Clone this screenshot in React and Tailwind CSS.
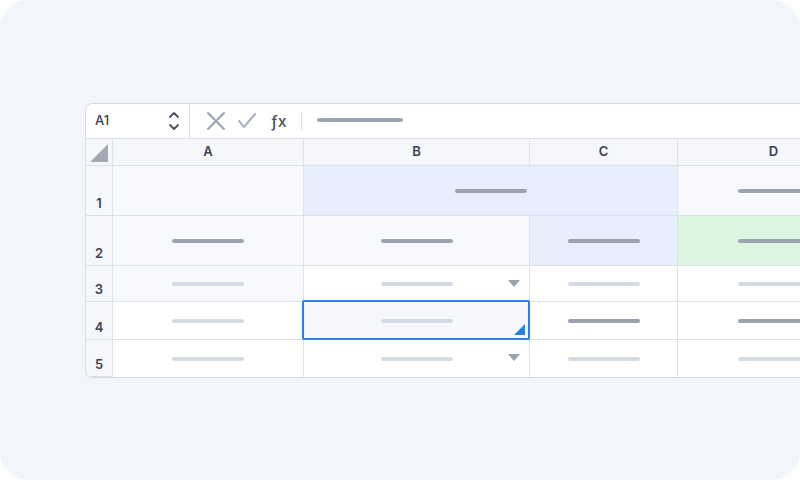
import React from 'react';

const FONT = { fontFamily: 'Inter, "Noto Sans", "Liberation Sans", sans-serif' };

function Bar({ dark }) {
  return <div className={`h-[4px] w-[72px] rounded-full ${dark ? 'bg-[#9ba3b1]' : 'bg-[#d5dbe5]'}`} />;
}

function DropArrow() {
  return (
    <svg className="absolute right-[9px] top-[14px]" width="12" height="7" viewBox="0 0 12 7">
      <path d="M0 0 H12 L6 7 Z" fill="#9ca2ad" />
    </svg>
  );
}

function Cell({ bg = 'bg-white', bar, span, children, className = '' }) {
  return (
    <div className={`relative flex items-center justify-center border-r border-b border-[#dde1e9] ${bg} ${span ? 'col-span-2' : ''} ${className}`}>
      {bar && <Bar dark={bar === 'dark'} />}
      {children}
    </div>
  );
}

function RowHead({ n }) {
  return (
    <div className="flex items-end justify-center border-r border-b border-[#dde1e9] bg-[#f5f7fb] pb-[2px] text-[13px] font-semibold text-[#3b4250]">
      {n}
    </div>
  );
}

function ColHead({ label }) {
  return (
    <div className="flex items-center justify-center border-r border-b border-[#dde1e9] bg-[#f5f7fb] text-[13px] font-semibold text-[#3b4250]">
      {label}
    </div>
  );
}

export default function App() {
  return (
    <div className="h-[480px] w-[800px] bg-white" style={FONT}>
      <div className="h-full w-full overflow-hidden rounded-[28px] bg-[#f3f5fc] pl-[85px] pt-[103px]">
        <div className="w-[800px] overflow-hidden rounded-l-[8px] border border-r-0 border-[#d8dce5] bg-white">
          {/* Formula bar */}
          <div className="flex h-[35px] items-center border-b border-[#dde1e9] bg-white">
            <div className="flex h-full w-[104px] items-center justify-between border-r border-[#dde1e9] pl-[9px] pr-[8px]">
              <span className="text-[13px] font-medium text-[#3b4250]">A1</span>
              <svg width="14" height="22" viewBox="0 0 14 22" fill="none" stroke="#4b5260" strokeWidth="1.8" strokeLinecap="round" strokeLinejoin="round">
                <path d="M3 7 L7 3 L11 7" />
                <path d="M3 15 L7 19 L11 15" />
              </svg>
            </div>
            <div className="flex h-full items-center pl-[16px]">
              <svg width="20" height="20" viewBox="0 0 20 20" fill="none" stroke="#9aa3b0" strokeWidth="2" strokeLinecap="round">
                <path d="M2 2 L18 18 M18 2 L2 18" />
              </svg>
              <svg className="ml-[11px]" width="20" height="20" viewBox="0 0 20 20" fill="none" stroke="#aab2be" strokeWidth="2" strokeLinecap="round" strokeLinejoin="round">
                <path d="M2 10 L7 16 L18 3" />
              </svg>
              <span className="ml-[14px] text-[16px] font-medium leading-none text-[#4b5260]">ƒx</span>
              <div className="ml-[14px] h-[18px] w-px bg-[#d8dce5]" />
              <div className="ml-[15px] mb-[2px] h-[4px] w-[86px] rounded-full bg-[#9ba3b1]" />
            </div>
          </div>

          {/* Grid */}
          <div className="grid grid-cols-[27px_191px_226px_148px_192px] grid-rows-[27px_50px_50px_36px_38px_37px]">
            <div className="relative border-r border-b border-[#dde1e9] bg-[#f5f7fb]">
              <svg className="absolute bottom-[3px] right-[4px]" width="18" height="18" viewBox="0 0 18 18">
                <path d="M18 0 V18 H0 Z" fill="#a3a9b4" />
              </svg>
            </div>
            <ColHead label="A" />
            <ColHead label="B" />
            <ColHead label="C" />
            <ColHead label="D" />

            <RowHead n="1" />
            <Cell bg="bg-[#f8f9fd]" />
            <Cell bg="bg-[#e7eefc]" bar="dark" span />
            <Cell bg="bg-[#f8f9fd]" bar="dark" />

            <RowHead n="2" />
            <Cell bg="bg-[#f8f9fd]" bar="dark" />
            <Cell bg="bg-[#f8f9fd]" bar="dark" />
            <Cell bg="bg-[#e7eefc]" bar="dark" />
            <Cell bg="bg-[#dbf5e1]" bar="dark" />

            <RowHead n="3" />
            <Cell bg="bg-[#f8f9fd]" bar="light" />
            <Cell bar="light"><DropArrow /></Cell>
            <Cell bar="light" />
            <Cell bar="light" />

            <RowHead n="4" />
            <Cell bar="light" />
            <Cell bg="bg-[#f6f8fc]" bar="light">
              <div className="absolute -left-[2px] -top-[2px] -right-px -bottom-px rounded-[2px] border-2 border-[#2b7fe6]">
                <svg className="absolute bottom-[3px] right-[3px]" width="11" height="11" viewBox="0 0 11 11">
                  <path d="M11 0 V11 H0 Z" fill="#2b7fe6" />
                </svg>
              </div>
            </Cell>
            <Cell bar="dark" />
            <Cell bar="dark" />

            <RowHead n="5" />
            <Cell bar="light" className="border-b-0" />
            <Cell bar="light" className="border-b-0"><DropArrow /></Cell>
            <Cell bar="light" className="border-b-0" />
            <Cell bar="light" className="border-b-0" />
          </div>
        </div>
      </div>
    </div>
  );
}
